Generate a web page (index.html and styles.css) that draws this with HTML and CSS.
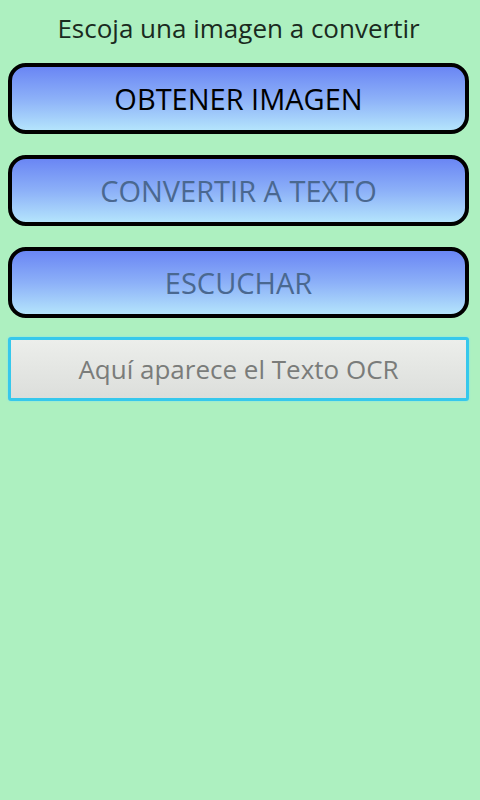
FILE: index.html
```html
<!DOCTYPE html>
<html lang="es">
<head>
    <meta charset="UTF-8">
    <meta name="viewport" content="width=device-width, initial-scale=1.0">
    <title>OCR</title>
    <link rel="stylesheet" href="styles.css">
</head>
<body>
    <div class="screen">
        <div class="title">Escoja una imagen a convertir</div>
        <button class="btn">OBTENER IMAGEN</button>
        <button class="btn disabled">CONVERTIR A TEXTO</button>
        <button class="btn disabled">ESCUCHAR</button>
        <div class="ocr">Aquí aparece el Texto OCR</div>
    </div>
</body>
</html>
```

FILE: styles.css
```css
html, body {
    margin: 0;
    padding: 0;
    background-color: #adf0c0;
}
.screen {
    width: 480px;
    height: 800px;
    padding: 10px 11px 0 8px;
    box-sizing: border-box;
    display: flex;
    flex-direction: column;
    font-family: "Open Sans", "DejaVu Sans", sans-serif;
}
.title {
    text-align: center;
    font-size: 26px;
    line-height: 36px;
    color: #1a2a1e;
    margin-bottom: 17px;
}
.btn {
    height: 71px;
    margin: 0 0 21px;
    border: 4px solid #000;
    border-radius: 18px;
    background: linear-gradient(to bottom, #6a86f4 0%, #8cb0f8 50%, #b4e4fc 100%);
    font-family: inherit;
    font-size: 29px;
    color: #000;
    padding: 0;
}
.btn.disabled {
    color: #4a6890;
}
.ocr {
    height: 64px;
    margin-top: -2px;
    border: 3px solid #36c8ec;
    border-radius: 3px;
    box-shadow: 0 0 2px #7ee0f4;
    background: linear-gradient(to bottom, #eceeeb 0%, #dcdedb 100%);
    box-sizing: border-box;
    display: flex;
    align-items: center;
    justify-content: center;
    font-size: 26px;
    color: #7a7c7a;
}
```
